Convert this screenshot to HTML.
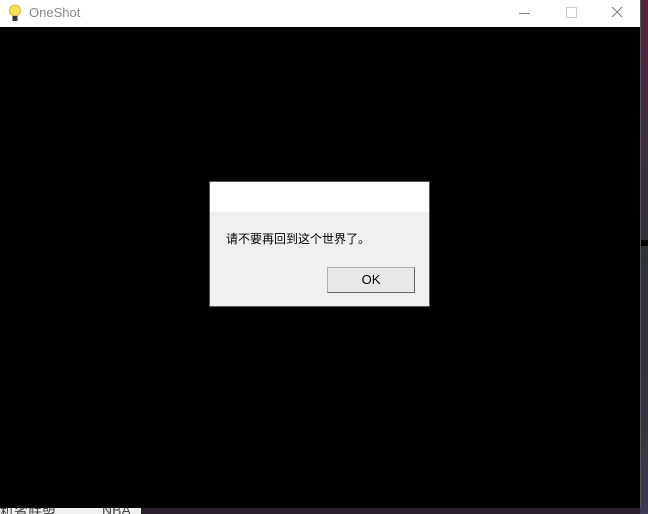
<!DOCTYPE html>
<html><head><meta charset="utf-8"><style>
body{margin:0;width:648px;height:514px;overflow:hidden;background:#3a3040;position:relative;font-family:"Liberation Sans","Noto Sans CJK SC",sans-serif}
.r{position:absolute}
</style></head><body>
<div class="r" style="left:640px;top:0;width:8px;height:514px;background:linear-gradient(#5a1e44,#3a2e3c 30%,#2e3038 50%,#35303f 80%,#3f3a55)"></div>
<div class="r" style="left:640px;top:240px;width:8px;height:6px;background:#000"></div>
<div class="r" style="left:0;top:508px;width:141px;height:6px;background:#f0f0f0;overflow:hidden"><span style="position:absolute;left:0;top:-6px;font-size:14px;color:#444">机省联盟</span><span style="position:absolute;left:102px;top:-6px;font-size:14px;color:#444">NBA</span></div>
<div class="r" style="left:141px;top:508px;width:499px;height:6px;background:#2a1e2c"></div>
<div class="r" style="left:0;top:0;width:640px;height:508px;background:#000;border-right:1px solid #555"></div>
<div class="r" style="left:0;top:0;width:640px;height:27px;background:#fff"></div>
<svg class="r" style="left:8px;top:4px" width="14" height="18" viewBox="0 0 14 18"><circle cx="7" cy="6.5" r="5.5" fill="#f6e35a" stroke="#e0b030"/><rect x="4.5" y="12" width="5" height="5" fill="#333"/></svg>
<div class="r" style="left:29px;top:5px;font-size:13px;color:#888">OneShot</div>
<div class="r" style="left:519px;top:13px;width:11px;height:1px;background:#888"></div>
<div class="r" style="left:566px;top:7px;width:9px;height:9px;border:1px solid #ccc"></div>
<svg class="r" style="left:611px;top:6px" width="12" height="12"><path d="M1 1L11 11M11 1L1 11" stroke="#777" stroke-width="1"/></svg>
<div class="r" style="left:209px;top:181px;width:219px;height:124px;background:#f0f0f0;border:1px solid #555"></div>
<div class="r" style="left:210px;top:182px;width:219px;height:30px;background:#fff"></div>
<div class="r" style="left:226px;top:230px;font-size:12px;color:#000">请不要再回到这个世界了。</div>
<div class="r" style="left:327px;top:267px;width:86px;height:24px;background:#e8e8e8;border:1px solid #adadad;border-right-color:#666;border-bottom-color:#666;text-align:center;line-height:24px;font-size:13px;color:#000">OK</div>
</body></html>
